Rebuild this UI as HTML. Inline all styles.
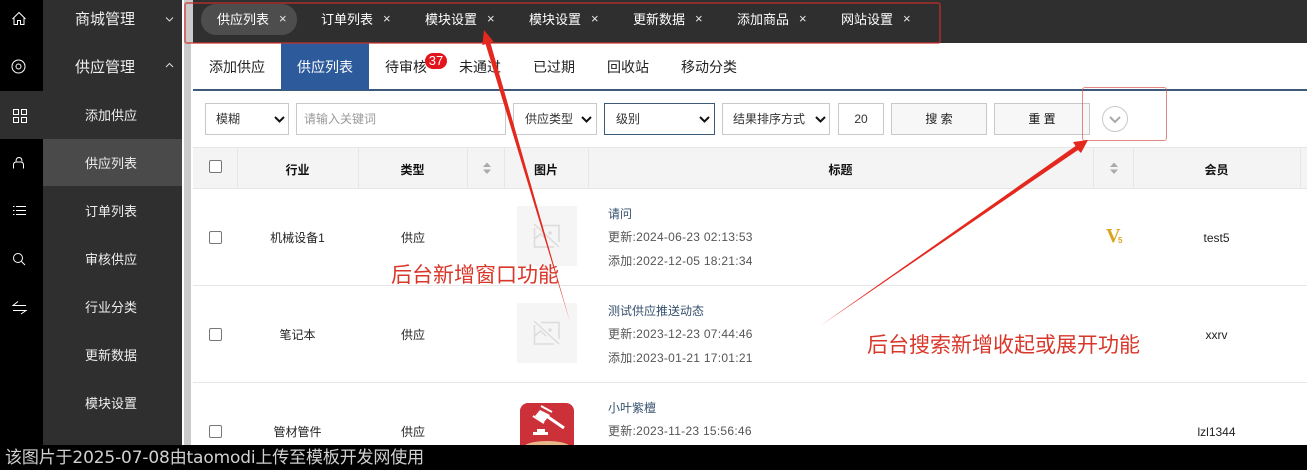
<!DOCTYPE html>
<html lang="zh"><head><meta charset="utf-8"><title>供应列表</title>
<style>
*{box-sizing:border-box}
html,body{margin:0;padding:0;width:1307px;height:470px;overflow:hidden;background:#fff;font-family:"Liberation Sans","Noto Sans CJK SC",sans-serif}
.a{position:absolute;white-space:nowrap}
.t{font-size:13px;line-height:20px;color:#fff;top:10px}
.x{font-size:13px;line-height:20px;color:#e8e8e8;top:9px}
.s{font-size:13px;color:#eee;line-height:20px}
.n{font-size:14px;color:#222;line-height:20px;top:57px}
.f{top:103px;height:32px;border:1px solid #c9c9c9;background:#fff;font-size:12px;line-height:31px;color:#333;padding-left:10px}
.c{font-size:12px;color:#222;line-height:18px;text-align:center}
.h{font-size:12px;font-weight:bold;color:#111;line-height:18px;top:161px;text-align:center}
.v{position:absolute;top:148px;width:1px;height:41px;background:#e6e6e6}
.r{position:absolute;left:193px;width:1114px;height:1px;background:#e6e6e6}
.cb{position:absolute;left:209px;width:13px;height:13px;border:1px solid #777;border-radius:2px;background:#fff}
.m{font-size:12px;color:#555;line-height:18px;left:608px;letter-spacing:.27px}
.l{font-size:12px;color:#35506e;line-height:18px;left:608px}
.ph{position:absolute;left:517px;width:60px;height:60px;background:#f5f5f5}
.red{font-size:21px;color:#d9372a;line-height:28px}
</style></head><body>

<!-- sidebar -->
<div class="a" style="left:0;top:0;width:43px;height:445px;background:#000"></div>
<div class="a" style="left:43px;top:0;width:139px;height:445px;background:#2f2f2f"></div>
<div class="a" style="left:0;top:91px;width:182px;height:48px;background:#2f2f2f"></div>
<div class="a" style="left:43px;top:139px;width:139px;height:47px;background:#4a4a4a"></div>
<div class="a" style="left:184px;top:0;width:7px;height:445px;background:#cbcbcb"></div>
<div class="a" style="left:191px;top:0;width:2px;height:43px;background:#cbcbcb"></div>

<svg class="a" style="left:0;top:0" width="43" height="330" fill="none" stroke="#fff" stroke-width="1">
<path d="M12.500 19 19 12.500 25.500 19M14 18v6.500h3.500v-4h3v4H24V18"/>
<circle cx="18.500" cy="66.500" r="2.500"/>
<circle cx="18.500" cy="66.500" r="6.500"/>
<rect x="13.500" y="109.500" width="5" height="5"/><rect x="21.500" y="109.500" width="5" height="5"/><rect x="13.500" y="117.500" width="5" height="5"/><rect x="21.500" y="117.500" width="5" height="5"/>
<path d="M13.500 168.500v-3.500q0-3 3-3h4q3 0 3 3v3.500M16 161.500q0-4 3-4t3 4"/>
<path d="M13 206.500h1.500M16 206.500h10M13 210.500h1.500M16 210.500h10M13 214.500h1.500M16 214.500h10"/>
<circle cx="18" cy="258" r="4.500"/><path d="M21.500 261.500 25 265"/>
<path d="M26 305.500H13L18 301.500M13 310.500H26L21 314"/>
</svg>

<div class="a" style="left:75px;top:10px;font-size:15px;line-height:20px;color:#eee">商城管理</div>
<div class="a" style="left:75px;top:58px;font-size:15px;line-height:20px;color:#eee">供应管理</div>
<svg class="a" style="left:165px;top:15px" width="10" height="60" fill="none" stroke="#ddd"><path d="M1 2.500 4.500 6 8 2.500M1 52 4.500 48.500 8 52"/></svg>
<div class="a s" style="left:85px;top:106px">添加供应</div>
<div class="a s" style="left:85px;top:154px">供应列表</div>
<div class="a s" style="left:85px;top:202px">订单列表</div>
<div class="a s" style="left:85px;top:250px">审核供应</div>
<div class="a s" style="left:85px;top:298px">行业分类</div>
<div class="a s" style="left:85px;top:346px">更新数据</div>
<div class="a s" style="left:85px;top:394px">模块设置</div>

<!-- top bar -->
<div class="a" style="left:193px;top:0;width:1114px;height:43px;background:#2f2f2f"></div>
<div class="a" style="left:201px;top:4px;width:96px;height:31px;border-radius:15px;background:#4d4d4d"></div>
<div class="a t" style="left:217px">供应列表</div><div class="a x" style="left:279px">×</div>
<div class="a t" style="left:321px">订单列表</div><div class="a x" style="left:383px">×</div>
<div class="a t" style="left:425px">模块设置</div><div class="a x" style="left:487px">×</div>
<div class="a t" style="left:529px">模块设置</div><div class="a x" style="left:591px">×</div>
<div class="a t" style="left:633px">更新数据</div><div class="a x" style="left:695px">×</div>
<div class="a t" style="left:737px">添加商品</div><div class="a x" style="left:799px">×</div>
<div class="a t" style="left:841px">网站设置</div><div class="a x" style="left:903px">×</div>

<!-- sub nav -->
<div class="a" style="left:193px;top:89px;width:1114px;height:2px;background:#3d5a78"></div>
<div class="a" style="left:281px;top:43px;width:88px;height:47px;background:#2d5a9a"></div>
<div class="a n" style="left:209px">添加供应</div>
<div class="a n" style="left:297px;color:#fff">供应列表</div>
<div class="a n" style="left:385px">待审核</div>
<div class="a" style="left:425px;top:53px;width:22px;height:16px;border-radius:8px;background:#e3141c;color:#fff;font-size:13px;line-height:16px;text-align:center">37</div>
<div class="a n" style="left:459px">未通过</div>
<div class="a n" style="left:533px">已过期</div>
<div class="a n" style="left:607px">回收站</div>
<div class="a n" style="left:681px">移动分类</div>

<!-- filters -->
<div class="a f" style="left:205px;width:84px">模糊</div>
<div class="a f" style="left:296px;width:210px;color:#999;padding-left:7px">请输入关键词</div>
<div class="a f" style="left:513px;width:84px;padding-left:11px">供应类型</div>
<div class="a f" style="left:604px;width:111px;border-color:#3d5a78;padding-left:11px">级别</div>
<div class="a f" style="left:722px;width:108px;padding-left:10px">结果排序方式</div>
<div class="a f" style="left:838px;width:46px;padding:0;text-align:center">20</div>
<div class="a f" style="left:891px;width:96px;padding:0;text-align:center;background:#f7f7f7;color:#222">搜 索</div>
<div class="a f" style="left:994px;width:96px;padding:0;text-align:center;background:#f7f7f7;color:#111">重 置</div>
<svg class="a" style="left:200px;top:111px" width="640" height="20" fill="none" stroke="#111" stroke-width="2"><path d="M75 6 79.500 10.500 84 6M382 6 386.500 10.500 391 6M500 6 504.500 10.500 509 6M616 6 620.500 10.500 625 6"/></svg>
<svg class="a" style="left:1100px;top:104px" width="30" height="30" fill="none"><circle cx="15" cy="15" r="12.500" stroke="#c9c9c9"/><path d="M10 13 15 18 20 13" stroke="#aaa" stroke-width="2"/></svg>

<!-- table head -->
<div class="a" style="left:193px;top:148px;width:1114px;height:41px;background:#f4f4f4"></div>
<div class="r" style="top:147px"></div><div class="r" style="top:188px"></div>
<div class="v" style="left:237px"></div><div class="v" style="left:358px"></div><div class="v" style="left:467px"></div><div class="v" style="left:504px"></div><div class="v" style="left:588px"></div><div class="v" style="left:1093px"></div><div class="v" style="left:1133px"></div><div class="v" style="left:1300px"></div>
<div class="a h" style="left:237px;width:121px">行业</div>
<div class="a h" style="left:358px;width:109px">类型</div>
<div class="a h" style="left:504px;width:84px">图片</div>
<div class="a h" style="left:588px;width:505px">标题</div>
<div class="a h" style="left:1133px;width:167px">会员</div>
<svg class="a" style="left:483px;top:162px" width="640" height="14" fill="#aaa"><path d="M0 5 4 0.500 8 5zM0 7.500 4 12 8 7.500zM627 5 631 0.500 635 5zM627 7.500 631 12 635 7.500z"/></svg>

<div class="cb" style="top:160px"></div>
<div class="cb" style="top:231px"></div>
<div class="cb" style="top:328px"></div>
<div class="cb" style="top:425px"></div>

<div class="r" style="top:285px"></div><div class="r" style="top:382px"></div>

<!-- rows -->
<div class="a c" style="left:237px;width:121px;top:229px">机械设备1</div>
<div class="a c" style="left:358px;width:110px;top:229px">供应</div>
<div class="a c" style="left:237px;width:121px;top:326px">笔记本</div>
<div class="a c" style="left:358px;width:110px;top:326px">供应</div>
<div class="a c" style="left:237px;width:121px;top:423px">管材管件</div>
<div class="a c" style="left:358px;width:110px;top:423px">供应</div>

<div class="ph" style="top:206px"></div>
<div class="ph" style="top:303px"></div>
<svg class="a" style="left:517px;top:206px" width="60" height="157" fill="none" stroke="#dcdcdc" stroke-width="1.500">
<path d="M17.500 22V41H37M24 19.500H42V36M17 18 42 41M17.500 33l6-5 5.500 5"/><circle cx="33" cy="27" r="1" fill="#dcdcdc"/>
<path d="M17.500 119V138H37M24 116.500H42V133M17 115 42 138M17.500 130l6-5 5.500 5"/><circle cx="33" cy="124" r="1" fill="#dcdcdc"/>
</svg>

<svg class="a" style="left:520px;top:403px" width="54" height="42">
<rect width="54" height="60" rx="8" fill="#cc3038"/>
<path d="M21 3 32 9M13 13 24 20" stroke="#fff" stroke-width="2" fill="none"/>
<path d="M20 7 30 12 24 19 15 13z" fill="#fff"/>
<path d="M28 14 44 25" stroke="#fff" stroke-width="3"/>
<path d="M13 29h15v3H13z" fill="#fff"/><path d="M17 26h8v3h-8z" fill="#fff"/>
<ellipse cx="27" cy="45" rx="24" ry="7" fill="#e6b98a"/>
</svg>

<div class="a l" style="top:205px">请问</div>
<div class="a m" style="top:228px">更新:2024-06-23 02:13:53</div>
<div class="a m" style="top:252px">添加:2022-12-05 18:21:34</div>
<div class="a l" style="top:302px">测试供应推送动态</div>
<div class="a m" style="top:325px">更新:2023-12-23 07:44:46</div>
<div class="a m" style="top:349px">添加:2023-01-21 17:01:21</div>
<div class="a l" style="top:399px">小叶紫檀</div>
<div class="a m" style="top:422px">更新:2023-11-23 15:56:46</div>

<div class="a" style="left:1106px;top:225px;font:bold 20px/22px 'Liberation Serif',serif;color:#dba520">V</div>
<div class="a" style="left:1118px;top:236px;font:bold 8px/10px 'Liberation Sans',sans-serif;color:#dba520">5</div>
<div class="a c" style="left:1133px;width:167px;top:229px">test5</div>
<div class="a c" style="left:1133px;width:167px;top:326px">xxrv</div>
<div class="a c" style="left:1133px;width:167px;top:423px">lzl1344</div>

<!-- annotations -->
<div class="a" style="left:184px;top:2px;width:757px;height:42px;border:2px solid #c9302c;border-radius:3px;opacity:.6"></div>
<div class="a" style="left:1082px;top:87px;width:85px;height:54px;border:1.500px solid #d9534f;border-radius:3px;opacity:.7"></div>
<svg class="a" style="left:0;top:0" width="1307" height="445">
<path d="M570 322 485.600 44.100 482.300 45.100 484 30 493.700 41.700 490.400 42.700z" fill="#e5281e"/>
<path d="M820 326 1075.500 146 1073 142 1088 140 1081 153 1078 150z" fill="#e5281e"/>
</svg>
<div class="a red" style="left:391px;top:262px">后台新增窗口功能</div>
<div class="a red" style="left:867px;top:332px">后台搜索新增收起或展开功能</div>

<!-- bottom bar -->
<div class="a" style="left:0;top:445px;width:1307px;height:25px;background:#000"></div>
<div class="a" style="left:5px;top:447px;font-family:'DejaVu Sans','Noto Sans CJK SC',sans-serif;font-size:17px;letter-spacing:-.15px;line-height:23px;color:#d0d0d0">该图片于2025-07-08由taomodi上传至模板开发网使用</div>
</body></html>
